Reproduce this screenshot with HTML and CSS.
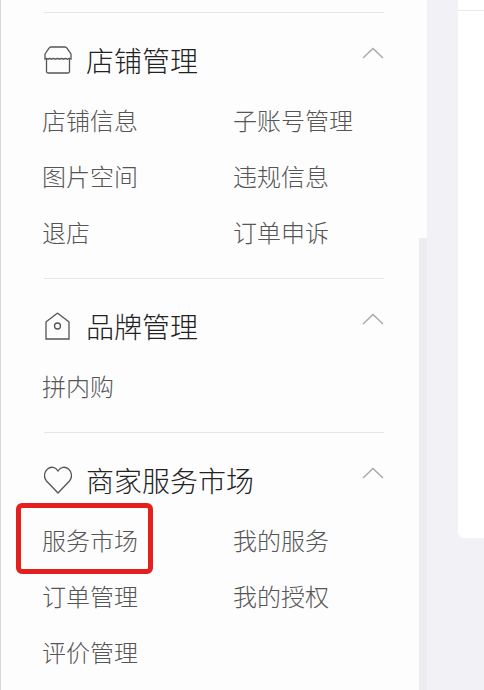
FILE: index.html
```html
<!DOCTYPE html>
<html lang="zh-CN">
<head>
<meta charset="utf-8">
<title>店铺管理</title>
<link rel="stylesheet" href="styles.css">
</head>
<body>
<div class="page">
  <aside class="sidebar">
    <section class="section">
      <header class="head">
        <svg class="icon" viewBox="0 0 28 28" fill="none"><path d="M1 8 5 2.200Q5.600 1 7 1H21Q22.400 1 23 2.200L27 8V13Q25 11.800 23.500 13.200 21.500 11.800 19.500 13.200 17.500 11.800 15.500 13.200 13.500 11.800 11.500 13.200 9.500 11.800 7.500 13.200 5.500 11.800 4 13.200 2.500 11.800 1 13z"/><path d="M2.500 13V25.500Q2.500 27 4 27H24Q25.500 27 25.500 25.500V13"/></svg>
        <h2 class="title">店铺管理</h2>
        <svg class="chev" viewBox="0 0 22 12" fill="none"><path d="M1 11 11 1.500 21 11"/></svg>
      </header>
      <ul class="items">
        <li>店铺信息</li><li>子账号管理</li>
        <li>图片空间</li><li>违规信息</li>
        <li>退店</li><li>订单申诉</li>
      </ul>
    </section>
    <section class="section">
      <header class="head">
        <svg class="icon" viewBox="0 0 28 28" fill="none"><path d="M2.500 9.500 13 1.400Q13.500 1 14 1.400L24.500 9.500Q25 10 25 10.500V27H2V10.500Q2 10 2.500 9.500z"/><circle cx="13.500" cy="14" r="3"/></svg>
        <h2 class="title">品牌管理</h2>
        <svg class="chev" viewBox="0 0 22 12" fill="none"><path d="M1 11 11 1.500 21 11"/></svg>
      </header>
      <ul class="items">
        <li>拼内购</li>
      </ul>
    </section>
    <section class="section">
      <header class="head">
        <svg class="icon" viewBox="0 0 28 28" fill="none"><path d="M14 27 2.500 15C-.5 11.500 0 6 3.500 3 7 0 11.500 1 14 5 16.500 1 21 0 24.500 3 28 6 28.500 11.500 25.500 15z"/></svg>
        <h2 class="title">商家服务市场</h2>
        <svg class="chev" viewBox="0 0 22 12" fill="none"><path d="M1 11 11 1.500 21 11"/></svg>
      </header>
      <ul class="items">
        <li>服务市场</li><li>我的服务</li>
        <li>订单管理</li><li>我的授权</li>
        <li>评价管理</li>
      </ul>
      <div class="highlight"></div>
    </section>
    <div class="scroll-thumb"></div>
  </aside>
  <div class="gutter"></div>
  <main class="content">
    <div class="topbar"></div>
    <div class="card"></div>
  </main>
</div>
</body>
</html>
```

FILE: styles.css
```css
* { box-sizing: border-box; }
html, body { margin: 0; height: 100%; overflow: hidden; }
body {
  background: #fff;
  font-family: "Noto Sans CJK SC", "Noto Sans", sans-serif;
}
.page { display: flex; height: 690px; width: 484px; }
.sidebar {
  position: relative;
  width: 427px;
  flex: none;
  padding: 12px 43px 0 42px;
  border-left: 1px solid #d8d8d8;
  background: #fdfdfe;
}
.section {
  position: relative;
  border-top: 1px solid #e6e6e8;
  margin-left: 1px;
  padding-top: 23px;
  padding-bottom: 17px;
  height: 266px;
}
.section:nth-child(2) { height: 154px; }
.section:nth-child(3) { height: 258px; }
.section:nth-child(2) .items { margin-top: 8px; }
.head {
  display: flex;
  align-items: center;
  height: 48px;
}
.icon {
  width: 28px;
  height: 28px;
  flex: none;
  stroke: #555;
  stroke-width: 1.300;
}
.title {
  margin: 0 0 0 14px;
  font-size: 28px;
  line-height: 48px;
  font-weight: 300;
  color: #222;
  white-space: nowrap;
}
.chev {
  width: 22px;
  height: 12px;
  flex: none;
  margin-left: auto;
  margin-top: -14px;
  stroke: #a8a8a8;
  stroke-width: 1.400;
}
.items {
  list-style: none;
  margin: 8px 0 0 -2px;
  padding: 0;
  display: grid;
  grid-template-columns: 191px 1fr;
  grid-auto-rows: 56px;
}
.items li {
  font-size: 24px;
  line-height: 56px;
  font-weight: 300;
  color: #555;
  white-space: nowrap;
}
.highlight {
  position: absolute;
  left: -28px;
  top: 70px;
  width: 137px;
  height: 71px;
  border: 5px solid #e4201f;
  border-radius: 6px;
}
.scroll-thumb {
  position: absolute;
  right: 0;
  top: 238px;
  bottom: 0;
  width: 8px;
  background: #ededf1;
}
.gutter { width: 31px; flex: none; background: #f1f1f6; }
.content { flex: 1; background: #f1f1f6; }
.topbar {
  height: 11px;
  background: #fff;
  border-bottom: 1px solid #e8e8ee;
}
.card {
  height: 527px;
  background: #fff;
  border-radius: 0 0 0 6px;
}
```
